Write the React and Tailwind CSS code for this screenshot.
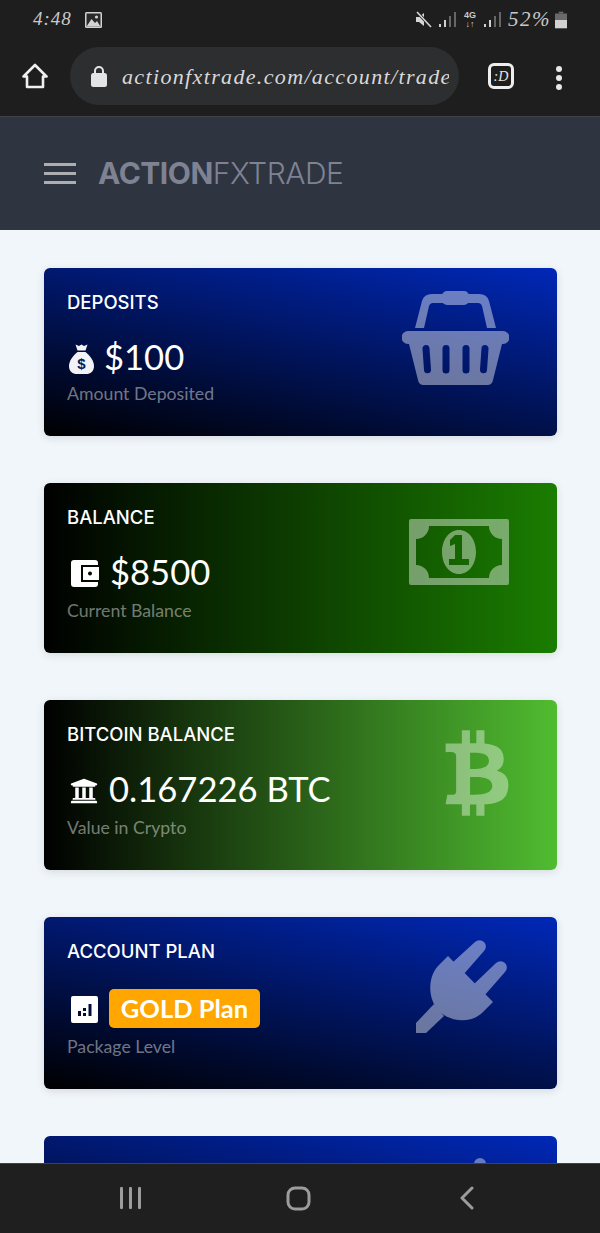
import React from "react";
import { FaBtc, FaUniversity } from "react-icons/fa";

function Signal() {
  return (
    <svg width="17" height="17" viewBox="0 0 17 17">
      <rect x="0" y="13" width="2" height="3" fill="#d0d0d0" />
      <rect x="5" y="9" width="2" height="7" fill="#d0d0d0" />
      <rect x="10" y="5" width="2" height="11" fill="#666" />
      <rect x="15" y="1" width="2" height="15" fill="#666" />
    </svg>
  );
}

function StatusBar() {
  return (
    <div className="h-[39px] flex items-center relative text-[#c9c9c9]">
      <span className="ml-[33px] w-[44px] text-[19px] italic font-['Liberation_Serif',serif] tracking-[1px]">4:48</span>
      <svg className="ml-[8px]" width="17" height="16" viewBox="0 0 17 16">
        <rect width="17" height="16" rx="1.5" fill="#d2d2d2" />
        <rect x="1.5" y="1.5" width="14" height="13" fill="#2a2a2a" />
        <path d="M1.5 14.5 L6.5 7 L10 11 L12 9 L15.5 14.5Z" fill="#d2d2d2" />
        <circle cx="11.5" cy="5" r="1.6" fill="#d2d2d2" />
      </svg>
      <div className="ml-auto mr-[33px] flex items-center">
        <svg width="17" height="17" viewBox="0 0 17 17">
          <path d="M1 6h3l5-4v13l-5-4H1Z" fill="#d6d6d6" />
          <path d="M2 1 L16 16" stroke="#1e1e1e" strokeWidth="3" />
          <path d="M2 1 L16 16" stroke="#d6d6d6" strokeWidth="1.6" />
        </svg>
        <span className="ml-[7px]"><Signal /></span>
        <div className="ml-[7px] w-[14px] flex flex-col items-center leading-none">
          <span className="text-[9px] font-bold font-['Liberation_Sans',sans-serif] leading-[9px]">4G</span>
          <span className="text-[9px] font-bold font-['Liberation_Sans',sans-serif] leading-[8px]">↓↑</span>
        </div>
        <span className="ml-[7px]"><Signal /></span>
        <span className="ml-[7px] w-[44px] text-[21px] italic font-['Liberation_Serif',serif] tracking-[1.5px] leading-none">52%</span>
        <svg className="ml-[3px]" width="12" height="18" viewBox="0 0 13 18">
          <rect x="4" y="0" width="5" height="2" fill="#6a6a6a" />
          <rect x="0" y="2" width="13" height="7" fill="#6a6a6a" />
          <rect x="0" y="9" width="13" height="9" fill="#d2d2d2" />
        </svg>
      </div>
    </div>
  );
}

function BrowserBar() {
  return (
    <div className="h-[78px] flex items-start pt-[8px] relative border-b border-[#3f4247]">
      <svg className="ml-[22px] mt-[16px]" width="26" height="26" viewBox="0 0 26 26" fill="none" stroke="#f0f0f0" strokeWidth="2.6" strokeLinejoin="round">
        <path d="M13 2 L24.5 13.5 H21 V24 H5 V13.5 H1.5 Z" />
      </svg>
      <div className="ml-[22px] w-[389px] h-[58px] rounded-full bg-[#2d2e2f] flex items-center overflow-hidden">
        <svg className="ml-[21px] shrink-0" width="16" height="22" viewBox="0 0 16 22">
          <path d="M4 9 V6 a4 4 0 0 1 8 0 V9" fill="none" stroke="#e4e4e4" strokeWidth="2" />
          <rect x="0" y="8" width="16" height="14" rx="2.5" fill="#e4e4e4" />
        </svg>
        <span className="ml-[15px] w-[327px] shrink-0 overflow-hidden whitespace-nowrap text-[22px] italic text-[#d9d9d9] font-['Liberation_Serif',serif] tracking-[1.35px]">actionfxtrade.com/account/trade</span>
      </div>
      <div className="ml-[29px] mt-[16px] w-[26px] h-[26px] rounded-[6px] border-[3px] border-[#eeeeee] flex items-center justify-center text-[14px] italic text-[#e8e8e8] font-['Liberation_Serif',serif]">:D</div>
      <div className="ml-[42px] mt-[19px] flex flex-col gap-[3px]">
        <span className="block w-[6px] h-[6px] rounded-full bg-[#e8e8e8]" />
        <span className="block w-[6px] h-[6px] rounded-full bg-[#e8e8e8]" />
        <span className="block w-[6px] h-[6px] rounded-full bg-[#e8e8e8]" />
      </div>
    </div>
  );
}

function NavBar() {
  return (
    <div className="h-[113px] shrink-0 bg-[#2e3440] flex items-center pl-[44px]">
      <div className="w-[32px] flex flex-col gap-[6px]">
        <span className="block h-[3px] bg-[#aeaeb2]" />
        <span className="block h-[3px] bg-[#aeaeb2]" />
        <span className="block h-[3px] bg-[#aeaeb2]" />
      </div>
      <div className="ml-[22px] mb-[2px] text-[30px] leading-none tracking-[-0.5px] text-[#7f8293] font-['Inter',sans-serif]">
        <span className="font-bold">ACTION</span>
        <span className="font-light">FXTRADE</span>
      </div>
    </div>
  );
}

function Basket({ className }) {
  return (
    <svg className={className} width="107" height="94" viewBox="0 0 107 94" fill="#fff" opacity="0.42">
      <path fillRule="evenodd" d="M6 40 H101 a6.5 6.5 0 0 1 0 13 H100 L91 89 a6 6 0 0 1 -6 5 H22 a6 6 0 0 1 -6 -5 L7 53 H6 a6.5 6.5 0 0 1 0 -13Z
        M24 54 a3.5 3.5 0 0 0 -3.5 4 l1.5 21 a3.5 3.5 0 0 0 7 -0.5 l-1.5 -21 a3.5 3.5 0 0 0 -3.5 -3.5Z
        M44 54 a3.5 3.5 0 0 0 -3.5 3.5 V79 a3.5 3.5 0 0 0 7 0 V57.5 a3.5 3.5 0 0 0 -3.5 -3.5Z
        M64 54 a3.5 3.5 0 0 0 -3.5 3.5 V79 a3.5 3.5 0 0 0 7 0 V57.5 a3.5 3.5 0 0 0 -3.5 -3.5Z
        M83 54 a3.5 3.5 0 0 0 -3.5 3.5 l-1.5 21 a3.5 3.5 0 0 0 7 0.5 l1.5 -21 a3.5 3.5 0 0 0 -3.5 -4Z" />
      <path d="M13 37 L20 10 Q22 3 30 3 H41 V12 H31 Q28 12 27 15 L22 37Z" />
      <path d="M94 37 L87 10 Q85 3 77 3 H66 V12 H76 Q79 12 80 15 L85 37Z" />
      <path d="M45 0 H62 a5 5 0 0 1 5 5 V9 a5 5 0 0 1 -5 5 H45 a5 5 0 0 1 -5 -5 V5 a5 5 0 0 1 5 -5Z" />
    </svg>
  );
}

function Money({ className }) {
  return (
    <svg className={className} width="100" height="66" viewBox="0 0 100 66" fill="#fff" opacity="0.42">
      <path fillRule="evenodd" d="M2 0 H98 a2 2 0 0 1 2 2 V64 a2 2 0 0 1 -2 2 H2 a2 2 0 0 1 -2 -2 V2 a2 2 0 0 1 2 -2Z
        M20 7 A13 13 0 0 1 7 20 V46 A13 13 0 0 1 20 59 H80 A13 13 0 0 1 93 46 V20 A13 13 0 0 1 80 7Z" />
      <path fillRule="evenodd" d="M50 11 C60 11 67 21 67 33 C67 45 60 55 50 55 C40 55 33 45 33 33 C33 21 40 11 50 11Z
        M46 16 L53 16 L53 40 L60 40 L60 46 L40 46 L40 40 L46 40 L46 25 L41 27 L41 21 Z" />
    </svg>
  );
}

function Plug({ className }) {
  return (
    <svg className={className} width="93" height="93" viewBox="0 0 93 93">
      <g fill="#fff" opacity="0.42">
        <path d="M32 16 L77 62 L66 73 C54 84 34 82 23 71 C12 60 11 38 22 26 Z" />
        <path d="M36 23 L59 2 a6 6 0 0 1 9 9 L47 35Z" />
        <path d="M57 45 L80 23 a6 6 0 0 1 9 9 L68 56Z" />
        <path d="M18 64 L0 83 V93 H10 L28 76Z" />
      </g>
    </svg>
  );
}

function Bag() {
  return (
    <svg width="25" height="30" viewBox="0 0 25 30">
      <path fill="#f1f3f6" d="M6.5 0.5 L10 2 L12.5 0.5 L15 2 L18.5 0.5 L16.5 6.5 H8.5Z" />
      <path fill="#f1f3f6" d="M8.5 8 H16.5 C21 11.5 25 17 25 22 C25 27.5 21.5 30 17 30 H8 C3.5 30 0 27.5 0 22 C0 17 4 11.5 8.5 8Z" />
      <text x="12.5" y="25" textAnchor="middle" fontSize="15" fontWeight="700" fill="#001a5c" fontFamily="Liberation Sans, sans-serif">$</text>
    </svg>
  );
}

function Wallet() {
  return (
    <svg width="28" height="28" viewBox="0 0 28 28" fill="#fff">
      <path fillRule="evenodd" d="M3 0 H24 a3 3 0 0 1 3 3 V5 H10 V22 H27 V24 a3 3 0 0 1 -3 3 H3 a3 3 0 0 1 -3 -3 V3 a3 3 0 0 1 3 -3Z" />
      <path fillRule="evenodd" d="M12 7 H28 V20 H12Z M19 11.5 a2 2 0 1 0 0.01 0Z" />
    </svg>
  );
}

function ChartSquare() {
  return (
    <svg width="27" height="27" viewBox="0 0 27 27">
      <path fillRule="evenodd" fill="#fff" d="M2 0 H25 a2 2 0 0 1 2 2 V25 a2 2 0 0 1 -2 2 H2 a2 2 0 0 1 -2 -2 V2 a2 2 0 0 1 2 -2Z
        M7 15 V20 H10 V15Z M12 17 V20 H15 V17Z M12 12 V15 H15 V12Z M17.5 8 V20 H20.5 V8Z" />
    </svg>
  );
}

function Title({ children }) {
  return <div className="h-[20px] leading-[20px] text-[18.5px] font-medium text-white font-['Inter',sans-serif]">{children}</div>;
}

function Value({ children }) {
  return <span className="text-[34.6px] leading-[44px] text-white font-['Lato',sans-serif]">{children}</span>;
}

function Sub({ children, className }) {
  return <div className={"h-[24px] leading-[24px] text-[17.7px] text-white/45 font-['Lato',sans-serif] " + className}>{children}</div>;
}

export default function App() {
  return (
    <div className="w-[600px] h-[1233px] flex flex-col overflow-hidden bg-[#f1f6fa]">
      <div className="shrink-0 bg-[#1e1e1e]">
        <StatusBar />
        <BrowserBar />
      </div>
      <NavBar />
      <main className="flex-1 min-h-0 overflow-hidden pl-[44px] pr-[43px] pt-[38px] flex flex-col gap-[47px]">
        <section className="shrink-0 h-[168px] rounded-[6px] bg-[linear-gradient(12deg,#000000,#0028b8)] shadow-[0_2px_8px_rgba(0,0,50,0.12)] flex justify-between items-start pl-[23px] pr-[48px]">
          <div className="pt-[24px]">
            <Title>DEPOSITS</Title>
            <div className="mt-[23px] ml-[2px] flex items-center gap-[10px]">
              <span className="mt-[4px]"><Bag /></span>
              <Value>$100</Value>
            </div>
            <Sub className="mt-[3px]">Amount Deposited</Sub>
          </div>
          <Basket className="mt-[23px]" />
        </section>

        <section className="shrink-0 h-[170px] rounded-[6px] bg-linear-to-r/srgb from-black to-[#1a7d00] shadow-[0_2px_8px_rgba(0,30,0,0.12)] flex justify-between items-start pl-[23px] pr-[48px]">
          <div className="pt-[24px]">
            <Title>BALANCE</Title>
            <div className="mt-[23px] ml-[4px] flex items-center gap-[11px]">
              <span className="mt-[4px]"><Wallet /></span>
              <Value>$8500</Value>
            </div>
            <Sub className="mt-[5px]">Current Balance</Sub>
          </div>
          <Money className="mt-[36px]" />
        </section>

        <section className="shrink-0 h-[170px] rounded-[6px] bg-linear-to-r/srgb from-black to-[#50bc30] shadow-[0_2px_8px_rgba(0,30,0,0.12)] flex justify-between items-start pl-[23px] pr-[48px]">
          <div className="pt-[24px]">
            <Title>BITCOIN BALANCE</Title>
            <div className="mt-[23px] ml-[3px] flex items-center gap-[11px]">
              <FaUniversity className="w-[28px] h-[32px] text-white mt-[4px]" />
              <Value>0.167226 BTC</Value>
            </div>
            <Sub className="mt-[5px]">Value in Crypto</Sub>
          </div>
          <FaBtc className="mt-[28px] w-[64px] h-[90px] text-white/40" />
        </section>

        <section className="shrink-0 h-[172px] rounded-[6px] bg-[linear-gradient(12deg,#000000,#0028b8)] shadow-[0_2px_8px_rgba(0,0,50,0.12)] flex justify-between items-start pl-[23px] pr-[48px]">
          <div className="pt-[24px]">
            <Title>ACCOUNT PLAN</Title>
            <div className="mt-[28px] ml-[4px] flex items-center gap-[11px]">
              <span className="mt-[2px]"><ChartSquare /></span>
              <span className="h-[39px] w-[151px] justify-center rounded-[5px] bg-[#ffa600] flex items-center text-white text-[25.5px] font-bold font-['Lato',sans-serif] leading-none">GOLD Plan</span>
            </div>
            <Sub className="mt-[7px]">Package Level</Sub>
          </div>
          <Plug className="mt-[23px]" />
        </section>

        <section className="shrink-0 h-[172px] rounded-[6px] bg-[linear-gradient(12deg,#000000,#0028b8)] flex justify-end items-start pr-[71px]">
          <span className="block mt-[22px] w-[12px] h-[12px] rounded-full bg-white/40" />
        </section>
      </main>
      <footer className="shrink-0 h-[70px] bg-[#1f1f1f] border-t border-[#3f4350] flex items-center text-[#9c9c9c]">
        <svg className="ml-[119px] mt-[-1px]" width="24" height="24" viewBox="0 0 24 24" fill="#9c9c9c">
          <rect x="1" y="1" width="3" height="22" rx="1" />
          <rect x="10" y="1" width="3" height="22" rx="1" />
          <rect x="19" y="1" width="3" height="22" rx="1" />
        </svg>
        <svg className="ml-[143px] mt-[-1px]" width="25" height="25" viewBox="0 0 25 25" fill="none" stroke="#9c9c9c" strokeWidth="3">
          <rect x="2" y="2" width="21" height="21" rx="7" />
        </svg>
        <svg className="ml-[148px] mt-[-1px]" width="16" height="24" viewBox="0 0 16 24" fill="none" stroke="#9c9c9c" strokeWidth="3" strokeLinecap="round" strokeLinejoin="round">
          <path d="M13 2 L3 12 L13 22" />
        </svg>
      </footer>
    </div>
  );
}
